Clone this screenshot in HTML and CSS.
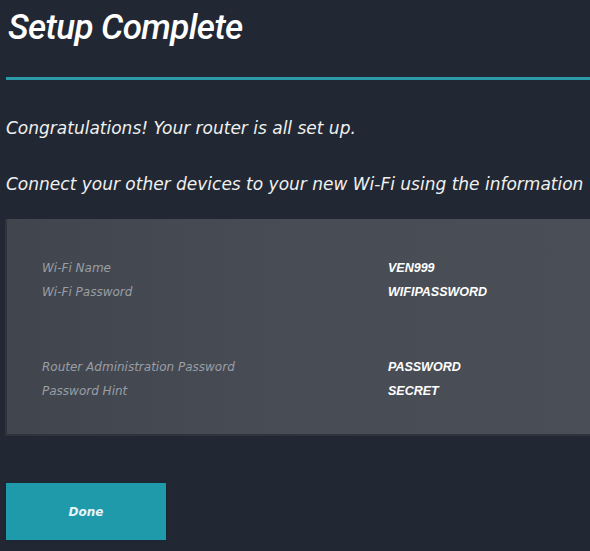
FILE: index.html
```html
<!DOCTYPE html>
<html>
<head>
<meta charset="utf-8">
<link rel="stylesheet" href="styles.css">
</head>
<body>
<div class="page">
  <h1 class="title">Setup Complete</h1>
  <div class="rule"></div>
  <p class="msg msg-first">Congratulations! Your router is all set up.</p>
  <p class="msg msg-second">Connect your other devices to your new Wi-Fi using the information</p>
  <div class="panel">
    <div class="group">
      <div class="row"><span class="label">Wi-Fi Name</span><span class="value">VEN999</span></div>
      <div class="row"><span class="label">Wi-Fi Password</span><span class="value">WIFIPASSWORD</span></div>
    </div>
    <div class="group group-admin">
      <div class="row"><span class="label">Router Administration Password</span><span class="value">PASSWORD</span></div>
      <div class="row"><span class="label">Password Hint</span><span class="value">SECRET</span></div>
    </div>
  </div>
  <button class="done">Done</button>
</div>
</body>
</html>
```
FILE: styles.css
```css
html, body {
  margin: 0;
  padding: 0;
  background: #222833;
}
.page {
  width: 590px;
  height: 551px;
  overflow: hidden;
  font-family: "DejaVu Sans", "Liberation Sans", sans-serif;
  color: #f2f2f2;
  font-style: italic;
}
.title {
  margin: 0;
  padding: 7px 0 0 8px;
  font-family: Roboto, "Liberation Sans", sans-serif;
  font-size: 35px;
  line-height: 42px;
  font-weight: 500;
  color: #ffffff;
  letter-spacing: -0.6px;
}
.rule {
  margin: 28px 0 0 6px;
  height: 3px;
  background: #2b9ba8;
}
.msg {
  margin: 0;
  padding-left: 6px;
  font-size: 17px;
  line-height: 20px;
  color: #f0f0f0;
}
.msg-first {
  margin-top: 38px;
}
.msg-second {
  margin-top: 36px;
  white-space: nowrap;
}
.panel {
  margin: 25px 0 0 5px;
  height: 217px;
  box-sizing: border-box;
  padding: 37px 0 0 35px;
  background: linear-gradient(90deg, #41464e 0%, #484d55 50%, #4a4f57 100%);
  border-left: 2px solid #2f343c;
  border-bottom: 2px solid #2f343c;
  display: flex;
  flex-direction: column;
  gap: 51px;
}
.row {
  display: flex;
  height: 24px;
  align-items: center;
  font-size: 12px;
}
.label {
  width: 346px;
  color: #9a9ea5;
}
.value {
  font-family: "Liberation Sans", Arial, sans-serif;
  font-size: 12.5px;
  color: #ffffff;
  font-weight: bold;
}
.done {
  display: block;
  margin: 47px 0 0 6px;
  width: 160px;
  height: 57px;
  border: none;
  background: #1e9aab;
  color: #e8f4f6;
  font-family: "DejaVu Sans", sans-serif;
  font-style: italic;
  font-weight: bold;
  font-size: 12px;
  padding: 0;
  box-shadow: 0 0 2px #0d2a33;
}
```
